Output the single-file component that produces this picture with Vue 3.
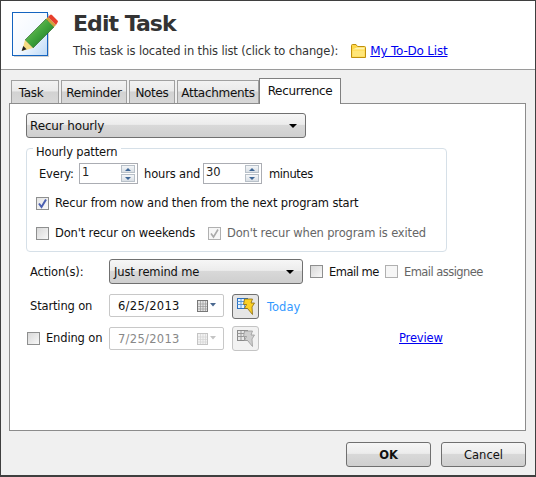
<template>
  <div class="dialog">
    <header class="head">
      <svg class="logo" width="48" height="48" viewBox="0 0 48 48">
        <defs>
          <linearGradient id="pageFill" x1="0" y1="0" x2="1" y2="1">
            <stop offset="0" stop-color="#ffffff" />
            <stop offset="0.55" stop-color="#f4f9ff" />
            <stop offset="1" stop-color="#bcd9f7" />
          </linearGradient>
          <linearGradient id="pencilBody" x1="0" y1="0" x2="1" y2="1">
            <stop offset="0" stop-color="#8ed06a" />
            <stop offset="0.5" stop-color="#3fa33c" />
            <stop offset="1" stop-color="#17691f" />
          </linearGradient>
        </defs>
        <rect x="2" y="2" width="35" height="43" fill="#000" opacity="0.18" />
        <rect x="0.5" y="0.5" width="35" height="43" fill="url(#pageFill)" stroke="#1464c0" />
        <path d="M13 28 L34 7 L42 15 L21 36 Z" fill="url(#pencilBody)" stroke="#1d5e1f" stroke-width="0.6" />
        <path d="M13 28 L21 36 L10 39 Z" fill="#f6dc85" />
        <path d="M11.3 34 L14.6 37.3 L9.6 39 Z" fill="#222" />
        <path d="M34 7 L36 5 L44 13 L42 15 Z" fill="#cfa23a" />
        <path d="M36 5 L38 3 Q39 2 40 3 L45.5 8.5 Q46.5 9.5 45.5 10.5 L44 13 Z" fill="#e8402c" />
      </svg>
      <div class="head-text">
        <h1>Edit Task</h1>
        <div class="location">
          <span>This task is located in this list (click to change):</span>
          <svg class="folder" width="15" height="14" viewBox="0 0 15 14">
            <path d="M0.5 13.5 V1.5 Q0.5 0.5 1.5 0.5 H5 L6.5 2.5 H13.5 Q14.5 2.5 14.5 3.5 V13.5 Z" fill="#ffd84a" stroke="#c0900c" />
            <path d="M1.5 5.5 L6 3.5 H13.5 V5.5 Z" fill="#fff3b0" />
            <path d="M1.5 6.5 H13.5 V12.5 H1.5 Z" fill="#ffe679" />
          </svg>
          <a class="link list-link">My To-Do List</a>
        </div>
      </div>
    </header>

    <main class="body">
      <nav class="tabs">
        <div v-for="tab in tabs" :key="tab.name" class="tab" :class="{ active: tab.active }" :style="{ width: tab.width + 'px' }">{{ tab.name }}</div>
      </nav>

      <section class="panel">
        <div class="combo recur-combo">
          <span>Recur hourly</span><i class="arrow"></i>
        </div>

        <div class="group">
          <div class="legend">Hourly pattern</div>
          <div class="every">
            <span class="every-label">Every:</span>
            <div class="spin"><span>1</span><div class="spin-btns"><b class="up"></b><b class="down"></b></div></div>
            <span class="every-mid">hours and</span>
            <div class="spin"><span>30</span><div class="spin-btns"><b class="up"></b><b class="down"></b></div></div>
            <span class="every-end">minutes</span>
          </div>
          <label class="check-row first">
            <span class="box checked">
              <svg width="11" height="11" viewBox="0 0 11 11"><path d="M2 5.5 L4.5 9 L9 1.5" fill="none" stroke="#4a5fb0" stroke-width="2" /></svg>
            </span>
            <span>Recur from now and then from the next program start</span>
          </label>
          <div class="check-row second">
            <span class="box"></span>
            <span class="weekends">Don't recur on weekends</span>
            <span class="box disabled">
              <svg width="11" height="11" viewBox="0 0 11 11"><path d="M2 5.5 L4.5 9 L9 1.5" fill="none" stroke="#a9a9a9" stroke-width="1.6" /></svg>
            </span>
            <span class="muted">Don't recur when program is exited</span>
          </div>
        </div>

        <div class="action-row">
          <span class="field-label">Action(s):</span>
          <div class="combo action-combo">
            <span>Just remind me</span><i class="arrow"></i>
          </div>
          <span class="box email-box"></span>
          <span class="email-text">Email me</span>
          <span class="box disabled assignee-box"></span>
          <span class="muted assignee-text">Email assignee</span>
        </div>

        <div class="date-row start-row">
          <span class="field-label">Starting on</span>
          <div class="date">
            <span>6/25/2013</span>
            <svg width="20" height="12" viewBox="0 0 20 12">
              <rect x="0.5" y="0.5" width="10" height="11" fill="#e4e4e4" stroke="#777" />
              <path d="M1 4 H10 M1 6.5 H10 M1 9 H10 M3.5 1 V11 M6 1 V11 M8.5 1 V11" stroke="#999" stroke-width="0.7" />
              <path d="M13 3 H19 L16 6.5 Z" fill="#4a6890" />
            </svg>
          </div>
          <div class="quick">
            <svg width="18" height="18" viewBox="0 0 18 18">
              <rect x="0.5" y="0.5" width="10" height="10" fill="#e6f3ff" stroke="#2a6fc0" />
              <path d="M0.5 3.5 H10.5 M0.5 6.5 H10.5 M4 1 V10 M7.5 1 V10" stroke="#5a9bdc" />
              <path d="M7.5 1 H15.5 L14 5 H17.5 L15 9 L15.5 16.5 L10.5 10.5 H7.5 L9.5 6.5 H6.5 Z" fill="#fbd024" stroke="#8a6a10" stroke-width="0.8" stroke-linejoin="round" />
            </svg>
          </div>
          <a class="today">Today</a>
        </div>

        <div class="date-row end-row">
          <span class="box end-box"></span>
          <span class="end-label">Ending on</span>
          <div class="date off">
            <span>7/25/2013</span>
            <svg width="20" height="12" viewBox="0 0 20 12">
              <rect x="0.5" y="0.5" width="10" height="11" fill="#f2f2f2" stroke="#c4c4c4" />
              <path d="M1 4 H10 M1 6.5 H10 M1 9 H10 M3.5 1 V11 M6 1 V11 M8.5 1 V11" stroke="#d4d4d4" stroke-width="0.7" />
              <path d="M13 3 H19 L16 6.5 Z" fill="#c4c4c4" />
            </svg>
          </div>
          <div class="quick off">
            <svg width="18" height="18" viewBox="0 0 18 18">
              <rect x="0.5" y="0.5" width="10" height="10" fill="#e8e8e8" stroke="#8a8a8a" />
              <path d="M0.5 3.5 H10.5 M0.5 6.5 H10.5 M4 1 V10 M7.5 1 V10" stroke="#999" />
              <path d="M7.5 1 H15.5 L14 5 H17.5 L15 9 L15.5 16.5 L10.5 10.5 H7.5 L9.5 6.5 H6.5 Z" fill="#cfcfcf" stroke="#9a9a9a" stroke-width="0.8" stroke-linejoin="round" />
            </svg>
          </div>
          <a class="link preview">Preview</a>
        </div>
      </section>

      <footer class="foot">
        <button class="btn ok">OK</button>
        <button class="btn">Cancel</button>
      </footer>
    </main>
  </div>
</template>

<script setup>
const tabs = [
  { name: 'Task', width: 48 },
  { name: 'Reminder', width: 66 },
  { name: 'Notes', width: 46 },
  { name: 'Attachments', width: 82 },
  { name: 'Recurrence', width: 82, active: true },
]
</script>

<style>
html, body { margin: 0; background: #f0f0f0; }
</style>

<style scoped>
.dialog {
  width: 536px;
  height: 477px;
  box-sizing: border-box;
  border: 1px solid #3f3f3f;
  border-bottom-width: 2px;
  font-family: "DejaVu Sans", sans-serif;
  font-size: 11.5px;
  letter-spacing: -0.15px;
  color: #111;
  background: #f0f0f0;
  display: flex;
  flex-direction: column;
  overflow: hidden;
}

.head {
  height: 69px;
  flex-shrink: 0;
  box-sizing: border-box;
  background: #fff;
  border-bottom: 1px solid #9a9a9a;
  padding: 11px 0 0 11px;
  display: flex;
}

.logo { flex-shrink: 0; }

.head-text { margin-left: 13px; }

h1 {
  margin: 0;
  font-family: "DejaVu Sans", sans-serif;
  font-size: 22px;
  line-height: 24px;
  font-weight: 700;
  letter-spacing: -0.95px;
  color: #333;
}

.location {
  display: flex;
  align-items: center;
  margin-top: 7px;
  height: 16px;
  color: #333;
}

.folder { margin-left: 13px; margin-right: 4px; }

.link {
  color: #0000f0;
  text-decoration: underline;
}

.list-link { font-size: 12px; letter-spacing: -0.2px; }

.body {
  flex: 1;
  padding: 8px 0 0 8px;
}

.tabs {
  display: flex;
  gap: 2px;
  height: 25px;
  margin-left: 2px;
}

.tab {
  box-sizing: border-box;
  border: 1px solid #a0a0a0;
  border-bottom: none;
  margin-top: 2px;
  background: linear-gradient(#f2f2f2 0, #eaeaea 45%, #d2d2d2 50%, #d8d8d8 100%);
  text-align: center;
  line-height: 24px;
  font-size: 12px;
  letter-spacing: -0.3px;
}

.tab:first-child { padding-right: 8px; }

.tab.active {
  margin-top: 0;
  margin-left: -2px;
  height: 26px;
  position: relative;
  z-index: 1;
  background: #fff;
  border-color: #808080;
  line-height: 24px;
}

.panel {
  width: 517px;
  height: 328px;
  box-sizing: border-box;
  background: #fff;
  border: 1px solid #8c8c8c;
  padding: 9px 0 0 16px;
}

.combo {
  box-sizing: border-box;
  height: 25px;
  border: 1px solid #707070;
  border-radius: 3px;
  padding: 0 8px 0 3px;
  background: linear-gradient(#f6f6f6 0, #ececec 45%, #d8d8d8 50%, #cfcfcf 100%);
  display: flex;
  align-items: center;
  justify-content: space-between;
}

.recur-combo { width: 280px; font-size: 12px; }

.arrow {
  width: 0;
  height: 0;
  border: 4px solid transparent;
  border-top: 4px solid #000;
  border-bottom: none;
}

.group {
  position: relative;
  box-sizing: border-box;
  width: 421px;
  height: 104px;
  margin-top: 10px;
  border: 1px solid #d6e0e8;
  border-radius: 4px;
  padding: 0 0 0 9px;
}

.legend {
  position: absolute;
  top: -3px;
  left: 6px;
  padding: 0 3px;
  background: #fff;
  line-height: 13px;
}

.every {
  display: flex;
  align-items: center;
  height: 21px;
  margin-top: 14px;
  margin-left: 3px;
}

.every-label { width: 40px; padding-top: 1px; }
.every-mid { width: 65px; padding: 1px 0 0 6px; box-sizing: border-box; }
.every-end { margin-left: 7px; padding-top: 1px; letter-spacing: -0.4px; }

.spin {
  box-sizing: border-box;
  width: 59px;
  height: 21px;
  border: 1px solid #abadb3;
  padding-left: 2px;
  display: flex;
  justify-content: space-between;
  color: #222;
  line-height: 17px;
}

.spin-btns {
  width: 14px;
  display: flex;
  flex-direction: column;
  gap: 1px;
  padding: 0;
  margin: 1px 2px 1px 0;
}

.spin-btns b {
  flex: 1;
  box-sizing: border-box;
  border: 1px solid #b8c0c8;
  background: linear-gradient(#f4f6f8, #d9dfe5);
  display: flex;
  align-items: center;
  justify-content: center;
}

.spin-btns b::after {
  content: "";
  border: 3px solid transparent;
}

.spin-btns .up::after { border-bottom-color: #3f6796; border-top: none; }
.spin-btns .down::after { border-top-color: #3f6796; border-bottom: none; }

.check-row {
  display: flex;
  align-items: center;
}

.check-row.first { margin-top: 12px; height: 14px; }
.check-row.second { margin-top: 16px; height: 14px; }

.box {
  flex-shrink: 0;
  box-sizing: border-box;
  width: 13px;
  height: 13px;
  border: 1px solid #8e8f8f;
  background: linear-gradient(135deg, #d8d8d8, #f8f8f8);
  display: inline-flex;
  align-items: center;
  justify-content: center;
  margin-right: 6px;
}

.box.checked { background: linear-gradient(135deg, #e4e4e4, #fafafa); }

.box.disabled {
  border-color: #b0b0b0;
  background: #f6f6f6;
}

.weekends { width: 153px; }
.muted { color: #666; }

.action-row {
  display: flex;
  align-items: center;
  height: 25px;
  margin-top: 7px;
}

.field-label {
  width: 83px;
  padding-left: 4px;
  box-sizing: border-box;
  flex-shrink: 0;
}

.action-combo {
  width: 194px;
  padding-left: 4px;
}

.email-box { margin-left: 7px; }
.email-text { width: 56px; letter-spacing: -0.5px; }
.assignee-text { letter-spacing: -0.55px; }

.date-row {
  display: flex;
  align-items: flex-start;
  height: 25px;
  line-height: 24px;
}

.start-row { margin-top: 10px; }
.end-row { margin-top: 7px; }

.date {
  box-sizing: border-box;
  width: 115px;
  height: 23px;
  border: 1px solid #c8c8c8;
  border-radius: 2px;
  padding: 0 6px 0 8px;
  display: flex;
  align-items: center;
  justify-content: space-between;
  letter-spacing: 0.3px;
  color: #111;
}

.date.off {
  color: #888;
  margin-top: 1px;
}

.quick {
  box-sizing: border-box;
  width: 27px;
  height: 25px;
  margin-left: 8px;
  border: 1px solid #707070;
  border-radius: 3px;
  background: #e6e6e6;
  display: flex;
  align-items: center;
  justify-content: center;
}

.quick.off {
  border-color: #c4c4c4;
  background: #f2f2f2;
}

.today {
  margin-left: 8px;
  color: #3399ff;
  line-height: 26px;
  letter-spacing: 0;
}

.end-box { margin: 6px 6px 0 1px; }

.end-label {
  width: 63px;
  flex-shrink: 0;
}

.preview { margin-left: 140px; }

.foot {
  display: flex;
  justify-content: flex-end;
  gap: 10px;
  margin-top: 11px;
  padding-right: 9px;
}

.btn {
  width: 85px;
  height: 25px;
  border: 1px solid #707070;
  border-radius: 3px;
  background: linear-gradient(#f6f6f6 0, #ececec 45%, #d8d8d8 50%, #cfcfcf 100%);
  font-family: inherit;
  font-size: 11.5px;
  color: #111;
  padding: 0;
}

.btn.ok { font-weight: 700; }
</style>
